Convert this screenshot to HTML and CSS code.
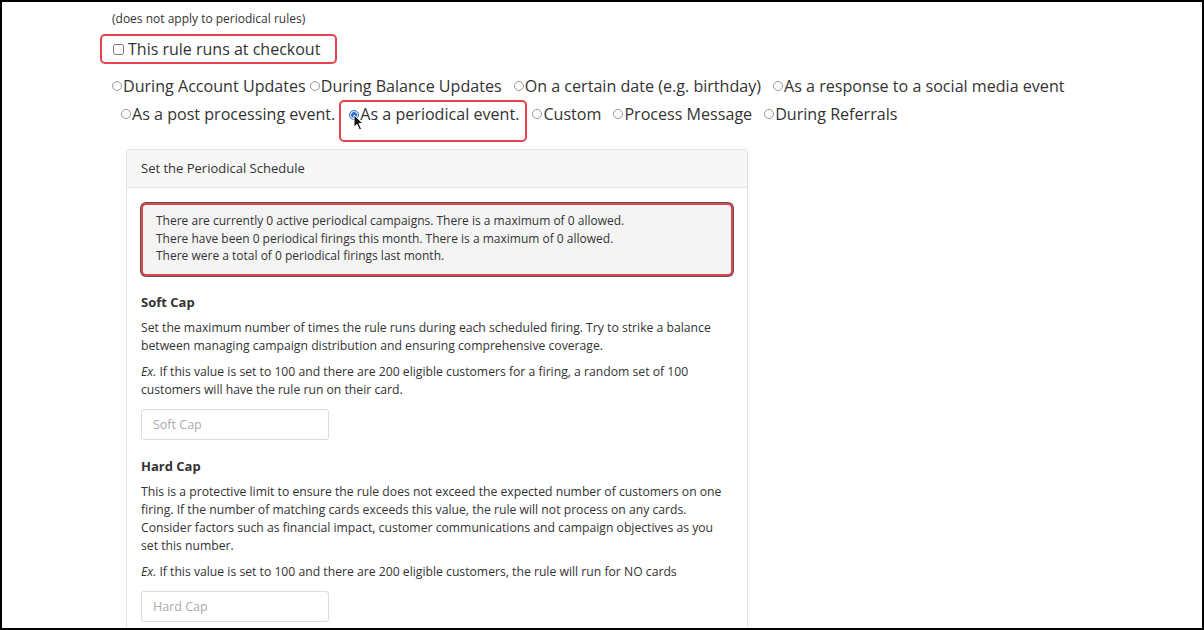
FILE: index.html
```html
<!DOCTYPE html>
<html lang="en">

<head>
  <meta charset="UTF-8">
  <meta name="viewport" content="width=device-width, initial-scale=1.0">
  <title>Rule Trigger</title>
  <link rel="stylesheet" href="styles.css">
</head>

<body>
  <div class="frame">
    <p class="note">(does not apply to periodical rules)</p>

    <label class="checkout highlight">
      <input type="checkbox" class="check">
      <span>This rule runs at checkout</span>
    </label>

    <div class="triggers">
      <div class="trigger-row">
        <label class="trigger tight"><input type="radio" name="trigger" class="radio">During Account Updates</label>
        <label class="trigger"><input type="radio" name="trigger" class="radio">During Balance Updates</label>
        <label class="trigger"><input type="radio" name="trigger" class="radio">On a certain date (e.g. birthday)</label>
        <label class="trigger"><input type="radio" name="trigger" class="radio">As a response to a social media event</label>
      </div>
      <div class="trigger-row second">
        <label class="trigger tight"><input type="radio" name="trigger" class="radio">As a post processing event.</label>
        <label class="trigger highlight selected">
          <input type="radio" name="trigger" class="radio" checked>As a periodical event.
          <svg class="pointer" width="12" height="17" viewBox="0 0 12 17">
            <path d="M1 1 L1 13 L4 10.5 L6.5 16 L8.5 15 L6 9.5 L10 9.5 Z" fill="#111" stroke="#fff" stroke-width="1"/>
          </svg>
        </label>
        <label class="trigger"><input type="radio" name="trigger" class="radio">Custom</label>
        <label class="trigger"><input type="radio" name="trigger" class="radio">Process Message</label>
        <label class="trigger"><input type="radio" name="trigger" class="radio">During Referrals</label>
      </div>
    </div>

    <div class="card">
      <div class="card-header">Set the Periodical Schedule</div>
      <div class="card-body">
        <div class="stats">
          <p>There are currently 0 active periodical campaigns. There is a maximum of 0 allowed.</p>
          <p>There have been 0 periodical firings this month. There is a maximum of 0 allowed.</p>
          <p>There were a total of 0 periodical firings last month.</p>
        </div>

        <h4>Soft Cap</h4>
        <p>Set the maximum number of times the rule runs during each scheduled firing. Try to strike a balance between managing campaign distribution and ensuring comprehensive coverage.</p>
        <p><em>Ex.</em> If this value is set to 100 and there are 200 eligible customers for a firing, a random set of 100 customers will have the rule run on their card.</p>
        <input type="text" class="cap-input" placeholder="Soft Cap">

        <h4>Hard Cap</h4>
        <p>This is a protective limit to ensure the rule does not exceed the expected number of customers on one firing. If the number of matching cards exceeds this value, the rule will not process on any cards. Consider factors such as financial impact, customer communications and campaign objectives as you set this number.</p>
        <p><em>Ex.</em> If this value is set to 100 and there are 200 eligible customers, the rule will run for NO cards</p>
        <input type="text" class="cap-input" placeholder="Hard Cap">
      </div>
    </div>
  </div>
</body>

</html>
```

FILE: styles.css
```css
body {
  margin: 0;
  padding: 0;
  background-color: #000;
  font-family: 'Open Sans', 'Liberation Sans', sans-serif;
  color: #333;
}

.frame {
  box-sizing: border-box;
  width: 1204px;
  height: 630px;
  margin: 0;
  border: 2px solid #000;
  background-color: white;
  padding: 8px 0 0 110px;
  overflow: hidden;
}

.note {
  margin: 0;
  font-size: 12px;
  line-height: 18px;
  color: #333;
}

.highlight {
  border: 2px solid #e8434c;
  border-radius: 5px;
}

.checkout {
  display: flex;
  width: fit-content;
  align-items: center;
  gap: 4px;
  box-sizing: border-box;
  margin: 6px 0 0 -12px;
  padding: 0 15px 0 11px;
  height: 30px;
  font-size: 16px;
  color: #333;
}

.check {
  margin: 0;
  width: 11px;
  height: 11px;
}

.triggers {
  margin-top: 8px;
  font-size: 16.1px;
  color: #333;
}

.trigger-row {
  display: flex;
  align-items: flex-start;
  height: 28px;
}

.trigger-row.second {
  padding-left: 9px;
}

.trigger {
  display: inline-flex;
  align-items: center;
  height: 28px;
  margin-right: 12px;
  white-space: nowrap;
}

.trigger.tight {
  margin-right: 4px;
}

.radio {
  appearance: none;
  -webkit-appearance: none;
  margin: 0 1px 0 0;
  width: 10px;
  height: 10px;
  border: 1px solid #999;
  border-radius: 50%;
  box-sizing: border-box;
}

.radio:checked {
  border-color: #2f6fd6;
  background: radial-gradient(circle, #2f6fd6 45%, #dce8fb 55%);
}

.selected {
  position: relative;
  box-sizing: border-box;
  height: 42px;
  align-items: flex-start;
  margin-right: 5px;
  padding: 1px 6px 0 8px;
}

.selected .radio {
  margin-top: 7px;
}

.pointer {
  position: absolute;
  left: 12px;
  top: 12px;
}

.card {
  width: 620px;
  margin: 21px 0 0 14px;
  border: 1px solid #e3e3e3;
  border-radius: 3px;
  background-color: white;
}

.card-header {
  background-color: #f7f7f7;
  border-bottom: 1px solid #e6e6e6;
  padding: 10px 14px;
  font-size: 13px;
  line-height: 17px;
}

.card-body {
  padding: 15px 14px;
  font-size: 12.2px;
  line-height: 18px;
}

.stats {
  background-color: #f4f4f4;
  border: 2px solid #e8434c;
  border-radius: 5px;
  box-shadow: 0 0 0 1px #555;
  padding: 7px 13px 9px;
  font-size: 12px;
  line-height: 17.5px;
}

.card-body .stats p {
  margin: 0;
}

.card-body h4 {
  margin: 17px 0 8px;
  font-size: 13px;
  line-height: 18px;
  font-weight: 700;
}

.card-body p {
  margin: 0 0 8px;
}

.cap-input {
  display: block;
  width: 188px;
  height: 31px;
  box-sizing: border-box;
  margin-top: 10px;
  padding: 0 11px;
  border: 1px solid #dcdcdc;
  border-radius: 3px;
  font-family: inherit;
  font-size: 12.5px;
}

.cap-input::placeholder {
  color: #aaa;
}
```
